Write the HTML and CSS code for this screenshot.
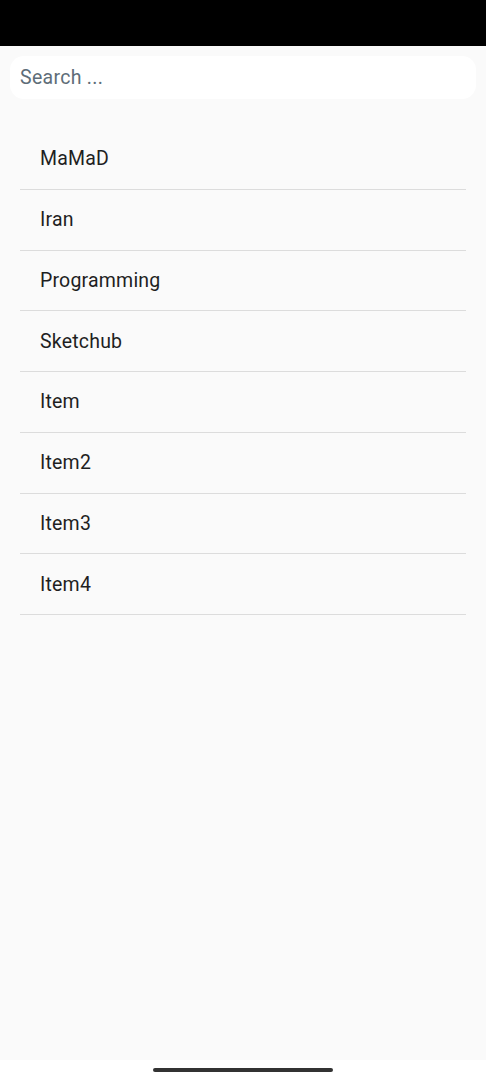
FILE: index.html
```html
<!DOCTYPE html>
<html>
<head>
<meta charset="utf-8">
<link rel="stylesheet" href="styles.css">
</head>
<body>
<div class="screen">
  <div class="status-bar"></div>
  <main class="content">
    <div class="search">
      <input class="search-input" type="text" placeholder="Search ...">
    </div>
    <ul class="list">
      <li class="item">MaMaD</li>
      <li class="item">Iran</li>
      <li class="item">Programming</li>
      <li class="item">Sketchub</li>
      <li class="item">Item</li>
      <li class="item">Item2</li>
      <li class="item">Item3</li>
      <li class="item">Item4</li>
    </ul>
  </main>
  <div class="nav-bar"><div class="handle"></div></div>
</div>
</body>
</html>
```
FILE: styles.css
```css
* { box-sizing: border-box; }
html, body { margin: 0; padding: 0; }
body {
  font-family: Roboto, "Noto Sans", sans-serif;
  background: #fafafa;
}
.screen {
  width: 486px;
  height: 1080px;
  display: flex;
  flex-direction: column;
}
.status-bar {
  height: 46px;
  background: #000;
  flex: none;
}
.content {
  flex: 1;
  background: #fafafa;
  padding: 10px 10px 0;
}
.search {
  height: 43px;
  background: #fff;
  border-radius: 14px;
  display: flex;
  align-items: center;
  padding: 0 10px;
}
.search-input {
  border: none;
  outline: none;
  background: transparent;
  width: 100%;
  font-family: Roboto, "Noto Sans", sans-serif;
  font-size: 19.5px;
  letter-spacing: 0.3px;
  color: #333;
  padding: 0;
}
.search-input::placeholder { color: #5e6d78; }
.list {
  list-style: none;
  margin: 30px 10px 0;
  padding: 0;
}
.item {
  height: 60.75px;
  display: flex;
  align-items: center;
  padding-left: 20px;
  font-size: 19.5px;
  letter-spacing: 0.2px;
  color: #1f1f1f;
  border-bottom: 1px solid #dcdcdc;
}
.nav-bar {
  height: 20px;
  flex: none;
  background: #fff;
  display: flex;
  justify-content: center;
  padding-top: 8px;
}
.handle {
  width: 180px;
  height: 4px;
  border-radius: 2px;
  background: #333;
}
```
